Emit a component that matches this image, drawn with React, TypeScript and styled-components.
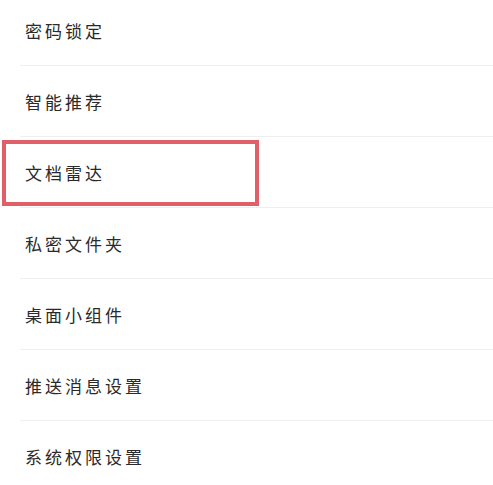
import React from "react";
import styled, { createGlobalStyle } from "styled-components";

const GlobalStyle = createGlobalStyle`
  html, body {
    margin: 0;
    padding: 0;
    background: #ffffff;
    overflow: hidden;
  }
`;

const items = [
  "密码锁定",
  "智能推荐",
  "文档雷达",
  "私密文件夹",
  "桌面小组件",
  "推送消息设置",
  "系统权限设置",
];

const HIGHLIGHTED = "文档雷达";

export default function App() {
  return (
    <>
      <GlobalStyle />
      <SettingsList>
        {items.map((label) => (
          <SettingsRow key={label}>
            <RowLabel>{label}</RowLabel>
            {label === HIGHLIGHTED && <Highlight />}
          </SettingsRow>
        ))}
      </SettingsList>
    </>
  );
}

const SettingsList = styled.div`
  display: flex;
  flex-direction: column;
  width: 493px;
  height: 485px;
  margin-top: -5px;
  background: #ffffff;
  font-family: "Noto Sans CJK SC", "Noto Sans", sans-serif;
`;

const SettingsRow = styled.div`
  position: relative;
  display: flex;
  align-items: center;
  flex-shrink: 0;
  height: 71px;
  margin-left: 20px;
  padding-left: 5px;
  box-sizing: border-box;
  border-bottom: 1px solid #efefef;
`;

const RowLabel = styled.span`
  font-size: 17px;
  font-weight: 400;
  letter-spacing: 3px;
  color: #2a2a2a;
  line-height: 1;
`;

const Highlight = styled.div`
  position: absolute;
  left: -18px;
  top: 3px;
  width: 257px;
  height: 66px;
  box-sizing: border-box;
  border: 4px solid #e0606a;
  pointer-events: none;
`;
